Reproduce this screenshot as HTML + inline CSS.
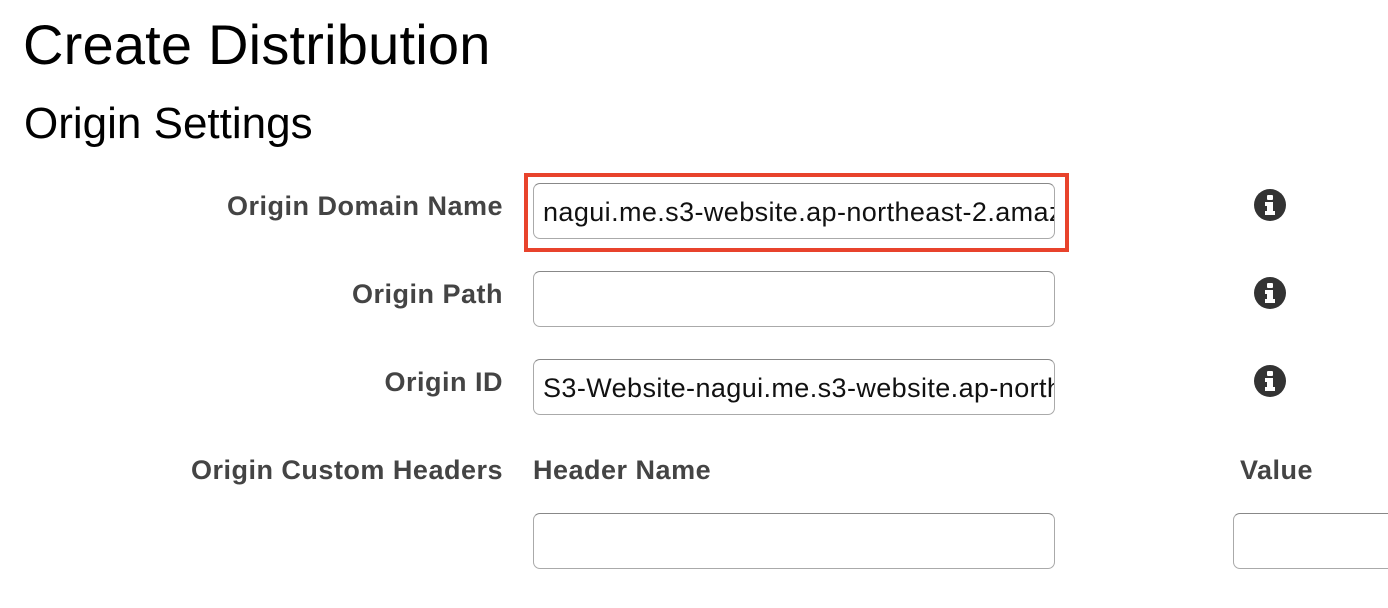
<!DOCTYPE html>
<html><head><style>
body{margin:0;width:1388px;height:608px;background:#fff;overflow:hidden;font-family:"Liberation Sans",Arial,sans-serif;position:relative}
.a{position:absolute;white-space:nowrap}
h1{position:absolute;left:23px;top:12px;margin:0;font-size:56px;font-weight:normal;color:#000;letter-spacing:0.2px}
h2{position:absolute;left:24px;top:99px;margin:0;font-size:44px;font-weight:normal;color:#000}
.lbl{position:absolute;right:885px;font-size:27px;font-weight:bold;color:#444;letter-spacing:0.5px;white-space:nowrap}
.inp{position:absolute;left:533px;height:54px;border:1px solid #aaa;border-top-color:#888;border-radius:7px;font-size:27px;letter-spacing:0.4px;color:#111;line-height:56px;padding-left:9px;box-sizing:content-box;overflow:hidden;white-space:nowrap;width:511px}
.hd{position:absolute;font-size:27px;font-weight:bold;color:#444;letter-spacing:0.5px}
svg{position:absolute}
</style></head><body>
<h1>Create Distribution</h1>
<h2>Origin Settings</h2>
<div class="lbl" style="top:191px">Origin Domain Name</div>
<div class="lbl" style="top:279px">Origin Path</div>
<div class="lbl" style="top:367px">Origin ID</div>
<div class="lbl" style="top:455px">Origin Custom Headers</div>
<div class="a" style="left:524px;top:173px;width:537px;height:71px;border:4px solid #e8432c"></div>
<div class="inp" style="top:183px">nagui.me.s3-website.ap-northeast-2.amazonaws.com</div>
<div class="inp" style="top:271px"></div>
<div class="inp" style="top:359px">S3-Website-nagui.me.s3-website.ap-northeast-2</div>
<div class="hd" style="left:533px;top:455px">Header Name</div>
<div class="hd" style="left:1240px;top:455px">Value</div>
<div class="inp" style="top:513px"></div>
<div class="inp" style="top:513px;left:1233px;width:300px"></div>
<svg style="left:1254px;top:189px" width="32" height="32" viewBox="0 0 32 32"><circle cx="16" cy="16" r="16" fill="#333"/><rect x="13" y="6" width="6" height="5" rx="1" fill="#fff"/><path d="M11 13h8v9h2v4H11v-4h2v-5h-2z" fill="#fff"/></svg>
<svg style="left:1254px;top:277px" width="32" height="32" viewBox="0 0 32 32"><circle cx="16" cy="16" r="16" fill="#333"/><rect x="13" y="6" width="6" height="5" rx="1" fill="#fff"/><path d="M11 13h8v9h2v4H11v-4h2v-5h-2z" fill="#fff"/></svg>
<svg style="left:1254px;top:365px" width="32" height="32" viewBox="0 0 32 32"><circle cx="16" cy="16" r="16" fill="#333"/><rect x="13" y="6" width="6" height="5" rx="1" fill="#fff"/><path d="M11 13h8v9h2v4H11v-4h2v-5h-2z" fill="#fff"/></svg>
</body></html>
